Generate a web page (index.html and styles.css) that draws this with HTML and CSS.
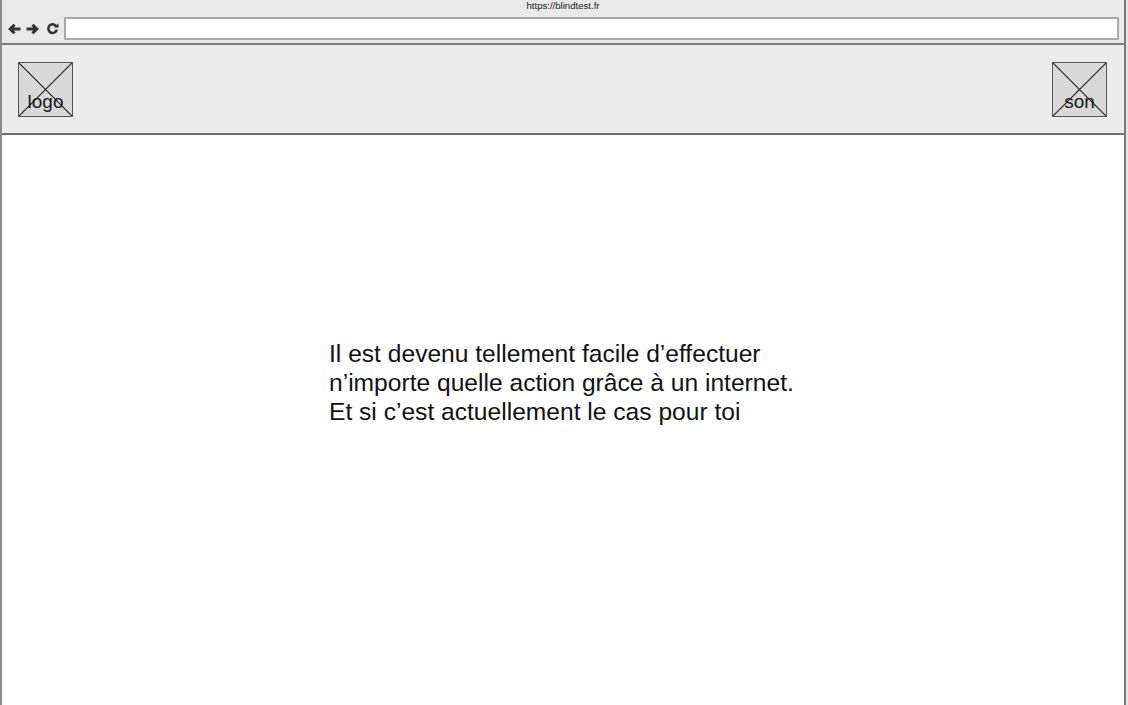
FILE: index.html
```html
<!DOCTYPE html>
<html lang="fr">
<head>
<meta charset="utf-8">
<title>blindtest</title>
<link rel="stylesheet" href="styles.css">
</head>
<body>
<div class="window">
  <div class="topbar">
    <div class="url-title">https://blindtest.fr</div>
    <div class="navrow">
      <svg class="ico back" width="14" height="12" viewBox="0 0 14 12"><path d="M13.5 6H3.5M7.5 1.8L3.2 6L7.5 10.2" fill="none" stroke="#333" stroke-width="3" stroke-linejoin="miter"/></svg>
      <svg class="ico fwd" width="14" height="12" viewBox="0 0 14 12"><path d="M0.5 6H10.5M6.5 1.8L10.8 6L6.5 10.2" fill="none" stroke="#333" stroke-width="3" stroke-linejoin="miter"/></svg>
      <svg class="ico reload" width="13" height="13" viewBox="0 0 13 13"><path d="M10.6 5A4.3 4.3 0 1 0 10.8 7.6" fill="none" stroke="#333" stroke-width="2.6"/><path d="M8.2 5.2L12.6 5.8L12.4 1.4Z" fill="#333"/></svg>
      <div class="addr"></div>
    </div>
  </div>
  <div class="header">
    <div class="ph">
      <svg class="cross" viewBox="0 0 55 55" preserveAspectRatio="none"><path d="M0 0L55 55M55 0L0 55" stroke="#222" stroke-width="1.2"/></svg>
      <span class="ph-label">logo</span>
    </div>
    <div class="ph">
      <svg class="cross" viewBox="0 0 55 55" preserveAspectRatio="none"><path d="M0 0L55 55M55 0L0 55" stroke="#222" stroke-width="1.2"/></svg>
      <span class="ph-label">son</span>
    </div>
  </div>
  <div class="main">
    <p class="intro">Il est devenu tellement facile d’effectuer<br>n’importe quelle action grâce à un internet.<br>Et si c’est actuellement le cas pour toi</p>
  </div>
</div>
</body>
</html>
```
FILE: styles.css
```css
html, body {
  margin: 0;
  padding: 0;
}
body {
  background: #e4e4e4;
  font-family: "Liberation Sans", Arial, sans-serif;
  color: #1a1a1a;
  width: 1128px;
  height: 705px;
  overflow: hidden;
}
.window {
  box-sizing: border-box;
  width: 1126px;
  height: 705px;
  border-left: 2px solid #8c8c8c;
  border-right: 2px solid #7a7a7a;
  background: #ffffff;
  display: flex;
  flex-direction: column;
}
.topbar {
  flex: none;
  box-sizing: border-box;
  background: #e9e9e9;
  height: 45px;
  border-bottom: 2px solid #7d7d7d;
  display: flex;
  flex-direction: column;
}
.url-title {
  font-size: 9.6px;
  line-height: 11px;
  height: 11px;
  text-align: center;
  color: #222;
}
.navrow {
  margin-top: 6px;
  display: flex;
  align-items: center;
  padding: 0 5px 0 5px;
  height: 23px;
}
.ico {
  flex: none;
  display: block;
}
.back { margin-right: 5px; }
.fwd { margin-right: 6px; }
.reload { margin-right: 5px; }
.addr {
  flex: 1;
  box-sizing: border-box;
  height: 23px;
  background: #ffffff;
  border: 2px solid #a9a9a9;
  border-radius: 1px;
}
.header {
  flex: none;
  box-sizing: border-box;
  background: #ececec;
  height: 90px;
  border-bottom: 2px solid #6e6e6e;
  display: flex;
  justify-content: space-between;
  align-items: flex-start;
  padding: 17px 17px 0 16px;
}
.ph {
  position: relative;
  box-sizing: border-box;
  width: 55px;
  height: 55px;
  background: #d8d8d8;
  border: 1px solid #555;
  display: flex;
  align-items: flex-end;
  justify-content: center;
  padding-bottom: 5px;
}
.cross {
  position: absolute;
  left: 0;
  top: 0;
  width: 100%;
  height: 100%;
}
.ph-label {
  position: relative;
  font-size: 19px;
  line-height: 19px;
  color: #1a1a1a;
}
.main {
  flex: 1;
  padding: 204px 0 0 327px;
}
.intro {
  margin: 0;
  font-size: 24.6px;
  line-height: 29.2px;
  color: #111;
}
```
